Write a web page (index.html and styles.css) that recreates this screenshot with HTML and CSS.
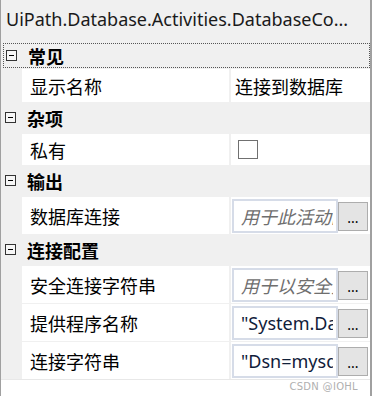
FILE: index.html
```html
<!DOCTYPE html>
<html lang="zh-CN">
<head>
<meta charset="UTF-8" />
<meta name="viewport" content="width=device-width, initial-scale=1" />
<title>属性</title>
<link rel="stylesheet" href="styles.css">
</head>
<body>

<div class="panel">
  <div class="title">UiPath.Database.Activities.DatabaseCo...</div>

  <div class="category first">
    <span class="toggle"></span>
    <span class="cat-name">常见</span>
  </div>
  <div class="prop">
    <div class="prop-name">显示名称</div>
    <div class="prop-value">连接到数据库</div>
  </div>

  <div class="category">
    <span class="toggle"></span>
    <span class="cat-name">杂项</span>
  </div>
  <div class="prop short">
    <div class="prop-name">私有</div>
    <div class="prop-value"><span class="checkbox"></span></div>
  </div>

  <div class="category">
    <span class="toggle"></span>
    <span class="cat-name">输出</span>
  </div>
  <div class="prop tall">
    <div class="prop-name">数据库连接</div>
    <div class="prop-value editor">
      <div class="textbox placeholder"><span>用于此活动的数据库连接</span></div>
      <button class="more">...</button>
    </div>
  </div>

  <div class="category">
    <span class="toggle"></span>
    <span class="cat-name">连接配置</span>
  </div>
  <div class="prop tall">
    <div class="prop-name">安全连接字符串</div>
    <div class="prop-value editor">
      <div class="textbox placeholder"><span>用于以安全方式连接</span></div>
      <button class="more">...</button>
    </div>
  </div>
  <div class="prop tall">
    <div class="prop-name">提供程序名称</div>
    <div class="prop-value editor">
      <div class="textbox"><span>"System.Data.Odbc"</span></div>
      <button class="more">...</button>
    </div>
  </div>
  <div class="prop tall">
    <div class="prop-name">连接字符串</div>
    <div class="prop-value editor">
      <div class="textbox"><span>"Dsn=mysql"</span></div>
      <button class="more">...</button>
    </div>
  </div>

  <div class="blank"></div>
  <div class="watermark">CSDN @IOHL</div>
</div>

</body>
</html>
```

FILE: styles.css
```css
body {
  margin: 0;
  background: #f0f0f0;
  font-family: "Noto Sans", "Noto Sans CJK SC", sans-serif;
  color: #000;
}
.panel {
  position: relative;
  width: 372px;
  height: 396px;
  box-sizing: border-box;
  border-left: 1px solid #a0a0a0;
  border-right: 2px solid #a0a0a0;
  background: #f0f0f0;
  display: flex;
  flex-direction: column;
  overflow: hidden;
}
.title {
  height: 43px;
  box-sizing: border-box;
  padding: 7px 0 0 5px;
  font-size: 18px;
  line-height: 24px;
  color: #1a1a1a;
  white-space: nowrap;
}
.category {
  height: 31px;
  box-sizing: border-box;
  display: flex;
  align-items: center;
  padding-left: 4px;
}
.category.first {
  height: 25px;
  margin: 0 0 0 2px;
  padding-left: 2px;
  border: 1px dotted #555;
}
.category.first + .prop {
  height: 34px;
}
.toggle {
  width: 9px;
  height: 9px;
  border: 1px solid #333;
  position: relative;
  background: #f6f6f6;
}
.toggle::after {
  content: "";
  position: absolute;
  left: 2px;
  top: 4px;
  width: 5px;
  height: 1px;
  background: #000;
}
.cat-name {
  margin-left: 11px;
  font-family: "Noto Sans CJK SC", sans-serif;
  font-weight: bold;
  font-size: 18px;
}
.prop {
  height: 32px;
  box-sizing: border-box;
  display: flex;
  gap: 2px;
  padding: 1px 0 0 21px;
}
.prop.short {
  height: 32px;
}
.prop.tall {
  height: 38px;
}
.prop-name,
.prop-value {
  background: #fff;
  display: flex;
  align-items: center;
  font-family: "Noto Sans CJK SC", sans-serif;
  font-size: 18px;
  white-space: nowrap;
  overflow: hidden;
}
.prop-name {
  width: 207px;
  padding-left: 8px;
  box-sizing: border-box;
}
.prop-value {
  flex: 1;
  padding-left: 4px;
}
.checkbox {
  width: 18px;
  height: 17px;
  border: 1px solid #707070;
  margin-left: 3px;
  background: #fff;
}
.editor {
  padding: 2px 1px 0 1px;
  align-items: flex-start;
}
.textbox {
  flex: none;
  width: 106px;
  height: 34px;
  box-sizing: border-box;
  border: 2px solid #d6dce8;
  padding: 0 3px 0 7px;
  line-height: 30px;
  font-family: "Noto Sans", "Noto Sans CJK SC", sans-serif;
  font-size: 18px;
  color: #10203a;
  white-space: nowrap;
}
.textbox span {
  display: block;
  overflow: hidden;
}
.placeholder {
  font-family: "Noto Sans CJK SC", sans-serif;
  font-style: italic;
  color: #6e6e6e;
}
.more {
  flex: none;
  width: 30px;
  height: 29px;
  margin-top: 3px;
  padding: 0;
  border: 1px solid #adadad;
  background: #e4e4e4;
  font-family: "Noto Sans", sans-serif;
  font-size: 14px;
  line-height: 30px;
  color: #000;
}
.blank {
  flex: 1;
  background: #fff;
  border-top: 1px solid #e8e8e8;
}
.watermark {
  position: absolute;
  right: 12px;
  bottom: 4px;
  font-family: "DejaVu Sans", sans-serif;
  font-size: 10px;
  color: #b0b0b0;
  letter-spacing: 0.3px;
}
```
